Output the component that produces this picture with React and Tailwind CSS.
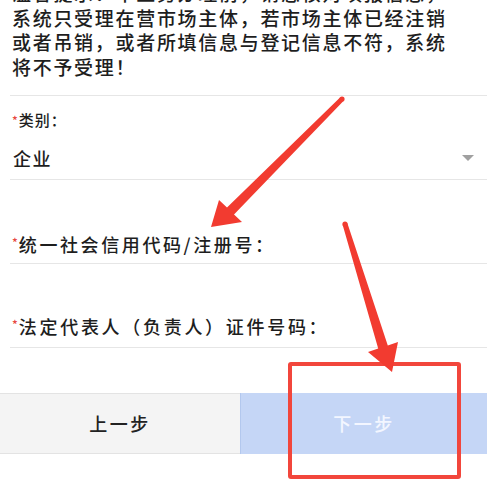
import React from 'react';

const Star = () => (
  <span className="text-[12px] leading-none text-[#e8473e] mt-[4px] mr-[1px]">*</span>
);

const notice = [
  '温馨提示：本业务办理前，请您核对填报信息，',
  '系统只受理在营市场主体，若市场主体已经注销',
  '或者吊销，或者所填信息与登记信息不符，系统',
  '将不予受理！',
];

const App = () => {
  return (
    <div className="relative w-[487px] h-[493px] overflow-hidden bg-white text-[#1e1e1e] font-medium font-['Noto_Sans_CJK_SC','Noto_Sans',sans-serif]">
      {/* notice text, first line scrolled off the top */}
      <div className="-mt-[19px] ml-[10px] pl-[2px] pb-[16px] border-b border-[#e6e6e6]">
        {notice.map((line) => (
          <div key={line} className="whitespace-nowrap text-[19px] leading-[24.5px] tracking-[1.7px]">
            {line}
          </div>
        ))}
      </div>

      {/* 类别 */}
      <div className="ml-[10px] pl-[2px] pt-[14px] pb-[9px] border-b border-[#e6e6e6]">
        <div className="flex items-start h-[20px]">
          <Star />
          <span className="text-[15px] leading-[20px] tracking-[1px]">类别：</span>
        </div>
        <div className="mt-[16px] flex items-center justify-between h-[24px] pr-[13px]">
          <span className="text-[18px] leading-[24px] tracking-[1.5px] pl-[1px]">企业</span>
          <span className="w-0 h-0 border-l-[6px] border-r-[6px] border-t-[6px] border-l-transparent border-r-transparent border-t-[#a0a0a0]" />
        </div>
      </div>

      {/* 统一社会信用代码 */}
      <div className="ml-[10px] pl-[2px] pt-[52px] pb-[7px] border-b border-[#e6e6e6]">
        <div className="flex items-start h-[24px]">
          <Star />
          <span className="text-[18px] leading-[24px] tracking-[2.6px]">统一社会信用代码/注册号：</span>
        </div>
      </div>

      {/* 法定代表人 */}
      <div className="ml-[10px] pl-[2px] pt-[50px] pb-[9px] border-b border-[#e6e6e6]">
        <div className="flex items-start h-[24px]">
          <Star />
          <span className="text-[18px] leading-[24px] tracking-[2.7px]">法定代表人（负责人）证件号码：</span>
        </div>
      </div>

      {/* buttons */}
      <div className="mt-[45px] flex h-[61px]">
        <button className="w-[240px] h-full bg-[#f4f4f4] border-y border-[#e3e3e3] text-[18px] tracking-[2.5px] text-[#222]">
          上一步
        </button>
        <button className="flex-1 h-full bg-[#c5d6f6] border-l border-[#b3c8ee] text-[18px] tracking-[2.5px] text-[#f3f6ff]">
          下一步
        </button>
      </div>

      {/* red highlight box */}
      <div className="absolute left-[288px] top-[362px] w-[173px] h-[117px] border-[4px] border-[#f2463c] rounded-[3px]" />

      {/* annotation arrows */}
      <svg className="absolute inset-0 pointer-events-none" width="487" height="493" viewBox="0 0 487 493">
        <g fill="#f23b30">
          <polygon points="343.7,100.8 234,214.6 242,222 211,227 219,200 227,207.4 340.3,97.2" />
          <circle cx="342" cy="99" r="2.6" />
          <polygon points="342.6,224.8 378.2,348.5 368,352 392,372 398,342 387.8,345.5 347.4,223.2" />
          <circle cx="345" cy="224" r="2.6" />
        </g>
      </svg>
    </div>
  );
};

export default App;
